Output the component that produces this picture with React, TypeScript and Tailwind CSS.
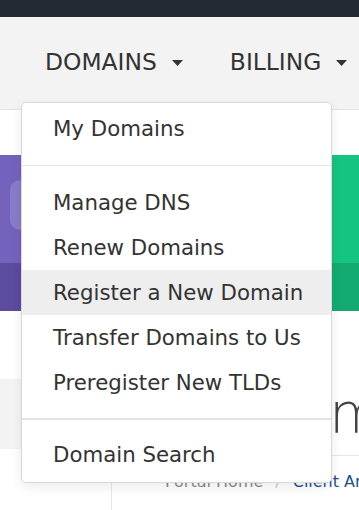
import { Fragment } from 'react';

const groups: string[][] = [
  ['My Domains'],
  ['Manage DNS', 'Renew Domains', 'Register a New Domain', 'Transfer Domains to Us', 'Preregister New TLDs'],
  ['Domain Search'],
];

const active = 'Register a New Domain';

function Caret() {
  return (
    <svg width="11" height="6" viewBox="0 0 11 6" className="shrink-0">
      <polygon points="0,0 11,0 5.5,6" fill="#333" />
    </svg>
  );
}

function NavItem({ label }: { label: string }) {
  return (
    <div className="flex items-center gap-[15px]">
      <span className="text-[23.4px] leading-none text-[#333]">{label}</span>
      <Caret />
    </div>
  );
}

function DomainsMenu() {
  return (
    <div className="absolute left-[21px] top-[102px] w-[311px] rounded-[5px] border border-[#d8d8d8] bg-white pt-[3px] pb-[5px] shadow-[0_4px_12px_rgba(0,0,0,0.08)]">
      {groups.map((items, gi) => (
        <Fragment key={gi}>
          {gi === 1 && (
            <div className="flex h-[29px] items-center">
              <div className="h-px w-full bg-[#e5e5e5]" />
            </div>
          )}
          {gi === 2 && (
            <div className="flex h-[27px] items-center">
              <div className="h-[2px] w-full bg-[#e3e3e3]" />
            </div>
          )}
          {items.map((label) => (
            <div
              key={label}
              className={`flex h-[45px] items-center pl-[31px] text-[21.3px] text-[#333] whitespace-nowrap ${
                label === active ? 'bg-[#eeeeee]' : ''
              }`}
            >
              {label}
            </div>
          ))}
        </Fragment>
      ))}
    </div>
  );
}

export default function App() {
  return (
    <div className="relative h-[510px] w-[359px] overflow-hidden bg-white font-['DejaVu_Sans',sans-serif]">
      <div className="h-[17px] bg-[#242a31]" />
      <nav className="flex h-[93px] items-center gap-[47px] border-b border-[#e3e3e3] bg-[#f3f3f3] pl-[45px]">
        <NavItem label="DOMAINS" />
        <NavItem label="BILLING" />
      </nav>

      <div className="h-[45px]" />

      <div className="grid h-[156px] grid-cols-2 gap-4">
        <div className="flex flex-col">
          <div className="flex-1 bg-[#7562bd] pl-[10px] pt-[25px]">
            <div className="h-[50px] w-[50px] rounded-[10px] bg-[#8a7bc8]" />
          </div>
          <div className="h-[48px] bg-[#5c4b9e]" />
        </div>
        <div className="flex flex-col">
          <div className="flex-1 bg-[#16c482]" />
          <div className="h-[48px] bg-[#13ab72]" />
        </div>
      </div>

      <div className="flex">
        <aside className="w-[112px] shrink-0 pt-[68px]">
          <div className="h-[70px] bg-[#f3f3f3]" />
          <div className="h-[61px] border-r border-[#e6e6e6]" />
        </aside>
        <main className="min-w-0 flex-1 pt-[75px]">
          <h1 className="border-b border-[#e6e6e6] pb-[14px] pl-[53px] text-[55px] leading-[55px] font-light text-[#444] whitespace-nowrap">
            Welcome Back, Alex
          </h1>
          <div className="mt-[14px] flex items-center gap-[12px] pl-[53px] text-[16px] leading-[24px] whitespace-nowrap">
            <span className="text-[#8a8a8a]">Portal Home</span>
            <span className="text-[#c8c8c8]">/</span>
            <span className="text-[#1d4f8c]">Client Area</span>
          </div>
        </main>
      </div>

      <DomainsMenu />
    </div>
  );
}
